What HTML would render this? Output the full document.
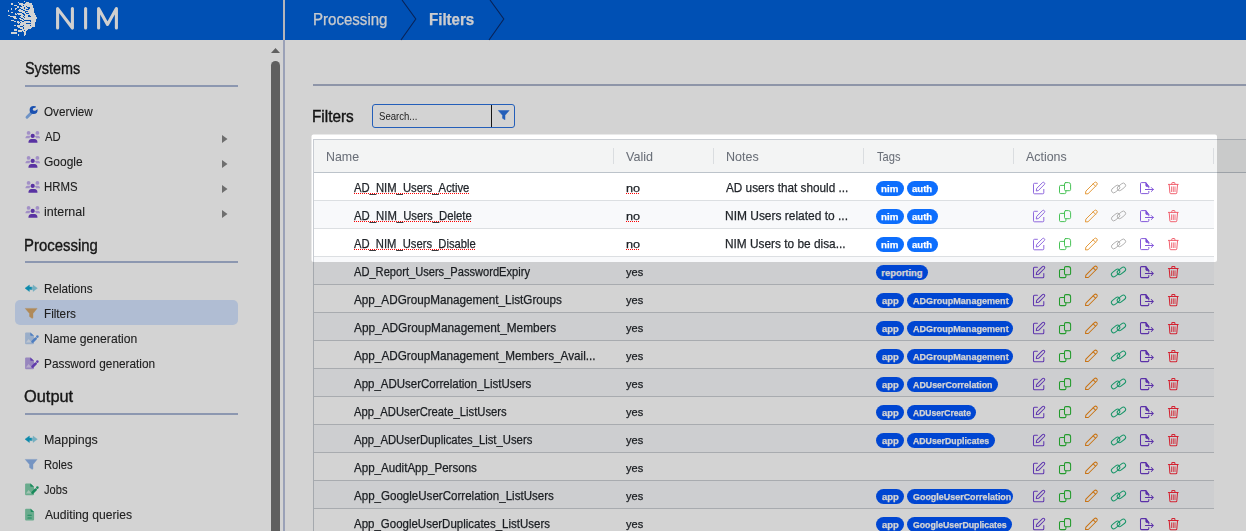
<!DOCTYPE html><html><head><meta charset="utf-8"><style>
*{box-sizing:border-box;margin:0;padding:0}
html,body{width:1246px;height:531px;overflow:hidden;background:#fff;font-family:"Liberation Sans",sans-serif;color:#222}
.t{position:absolute;white-space:nowrap;line-height:1;transform-origin:0 0;-webkit-text-stroke:0.25px currentColor}

.b{position:absolute}
svg{position:absolute;overflow:visible}
.pill{position:absolute;height:15px;border-radius:7.5px;background:#0d6efd;overflow:hidden}
</style></head><body>
<div class="b" style="left:0;top:0;width:1246px;height:40px;background:#0061d9"></div>
<svg style="left:0;top:0" width="1246" height="40"><path d="M402 0 L415.8 19 L401 40" fill="none" stroke="#0a2a6a" stroke-width="1.1"/><path d="M490 0 L503.8 19 L489 40" fill="none" stroke="#0a2a6a" stroke-width="1.1"/></svg>
<svg style="left:0;top:0" width="140" height="40"><g fill="none" stroke="#fafafa" stroke-width="3.1" stroke-linecap="round" stroke-linejoin="round"><path d="M57.6 28 V8.6 L72.4 28 V8.6"/><path d="M85.6 8.6 V28"/><path d="M98.6 28 V8.6 L107.5 24.5 L116.4 8.6 V28"/></g></svg>
<svg style="left:0;top:0" width="45" height="40" shape-rendering="auto"><g fill="#ffffff"><rect x="24" y="1" width="1" height="1"/><rect x="18" y="2" width="1" height="1"/><rect x="26" y="2" width="3" height="1"/><rect x="11" y="3" width="2" height="1"/><rect x="19" y="3" width="4" height="1"/><rect x="25" y="3" width="7" height="1"/><rect x="11" y="4" width="2" height="1"/><rect x="19" y="4" width="5" height="1"/><rect x="24" y="4" width="8" height="1"/><rect x="14" y="5" width="3" height="1"/><rect x="21" y="5" width="2" height="1"/><rect x="24" y="5" width="9" height="1"/><rect x="17" y="6" width="2" height="1"/><rect x="22" y="6" width="4" height="1"/><rect x="27" y="6" width="6" height="1"/><rect x="17" y="7" width="2" height="1"/><rect x="20" y="7" width="4" height="1"/><rect x="25" y="7" width="2" height="1"/><rect x="30" y="7" width="3" height="1"/><rect x="11" y="8" width="1" height="1"/><rect x="15" y="8" width="2" height="1"/><rect x="21" y="8" width="3" height="1"/><rect x="25" y="8" width="3" height="1"/><rect x="30" y="8" width="4" height="1"/><rect x="11" y="9" width="1" height="1"/><rect x="15" y="9" width="1" height="1"/><rect x="19" y="9" width="2" height="1"/><rect x="23" y="9" width="3" height="1"/><rect x="29" y="9" width="5" height="1"/><rect x="8" y="10" width="1" height="1"/><rect x="18" y="10" width="5" height="1"/><rect x="25" y="10" width="9" height="1"/><rect x="8" y="11" width="1" height="1"/><rect x="19" y="11" width="5" height="1"/><rect x="24" y="11" width="1" height="1"/><rect x="28" y="11" width="6" height="1"/><rect x="11" y="12" width="2" height="1"/><rect x="22" y="12" width="3" height="1"/><rect x="26" y="12" width="8" height="1"/><rect x="15" y="13" width="1" height="1"/><rect x="17" y="13" width="5" height="1"/><rect x="24" y="13" width="2" height="1"/><rect x="29" y="13" width="6" height="1"/><rect x="15" y="14" width="2" height="1"/><rect x="18" y="14" width="5" height="1"/><rect x="25" y="14" width="10" height="1"/><rect x="8" y="15" width="2" height="1"/><rect x="21" y="15" width="3" height="1"/><rect x="25" y="15" width="3" height="1"/><rect x="30" y="15" width="6" height="1"/><rect x="10" y="16" width="6" height="1"/><rect x="20" y="16" width="3" height="1"/><rect x="24" y="16" width="4" height="1"/><rect x="31" y="16" width="5" height="1"/><rect x="13" y="17" width="3" height="1"/><rect x="21" y="17" width="3" height="1"/><rect x="25" y="17" width="12" height="1"/><rect x="14" y="18" width="3" height="1"/><rect x="19" y="18" width="2" height="1"/><rect x="23" y="18" width="14" height="1"/><rect x="20" y="19" width="3" height="1"/><rect x="24" y="19" width="12" height="1"/><rect x="11" y="20" width="3" height="1"/><rect x="22" y="20" width="2" height="1"/><rect x="31" y="20" width="5" height="1"/><rect x="14" y="21" width="2" height="1"/><rect x="17" y="21" width="2" height="1"/><rect x="20" y="21" width="2" height="1"/><rect x="24" y="21" width="6" height="1"/><rect x="31" y="21" width="5" height="1"/><rect x="17" y="22" width="3" height="1"/><rect x="21" y="22" width="14" height="1"/><rect x="18" y="23" width="1" height="1"/><rect x="20" y="23" width="6" height="1"/><rect x="31" y="23" width="4" height="1"/><rect x="20" y="24" width="6" height="1"/><rect x="26" y="24" width="9" height="1"/><rect x="14" y="25" width="2" height="1"/><rect x="17" y="25" width="6" height="1"/><rect x="24" y="25" width="6" height="1"/><rect x="31" y="25" width="4" height="1"/><rect x="17" y="26" width="3" height="1"/><rect x="23" y="26" width="12" height="1"/><rect x="18" y="27" width="5" height="1"/><rect x="24" y="27" width="8" height="1"/><rect x="20" y="28" width="3" height="1"/><rect x="24" y="28" width="7" height="1"/><rect x="14" y="29" width="3" height="1"/><rect x="22" y="29" width="6" height="1"/><rect x="14" y="30" width="3" height="1"/><rect x="18" y="30" width="4" height="1"/><rect x="22" y="30" width="2" height="1"/><rect x="25" y="30" width="2" height="1"/><rect x="18" y="31" width="4" height="1"/><rect x="23" y="31" width="3" height="1"/><rect x="11" y="32" width="6" height="1"/><rect x="24" y="32" width="2" height="1"/><rect x="11" y="33" width="6" height="1"/><rect x="24" y="33" width="2" height="1"/><rect x="18" y="34" width="1" height="1"/><rect x="24" y="34" width="2" height="1"/><rect x="18" y="35" width="1" height="1"/><rect x="24" y="35" width="1" height="1"/></g></svg>
<div class="b" style="left:283px;top:0;width:2px;height:40px;background:#dadbe2"></div>
<div class="b" style="left:283px;top:40px;width:2px;height:491px;background:#bac2dd"></div>
<svg style="left:270px;top:46px" width="12" height="10"><path d="M1 7 L5.5 2 L10 7 Z" fill="#747474"/></svg>
<div class="b" style="left:271px;top:61px;width:9px;height:480px;border-radius:4.5px;background:#737373"></div>
<div class="b" style="left:25px;top:85px;width:213px;height:2px;background:#a9b7d5"></div>
<div class="b" style="left:25px;top:261px;width:213px;height:2px;background:#a9b7d5"></div>
<div class="b" style="left:25px;top:413px;width:213px;height:2px;background:#a9b7d5"></div>
<div class="b" style="left:15px;top:300px;width:223px;height:25px;border-radius:5px;background:#d5e5ff"></div>
<svg style="left:222px;top:135px" width="6" height="8"><path d="M0 0 L5.5 4 L0 8 Z" fill="#858585"/></svg>
<svg style="left:222px;top:160px" width="6" height="8"><path d="M0 0 L5.5 4 L0 8 Z" fill="#858585"/></svg>
<svg style="left:222px;top:185px" width="6" height="8"><path d="M0 0 L5.5 4 L0 8 Z" fill="#858585"/></svg>
<svg style="left:222px;top:210px" width="6" height="8"><path d="M0 0 L5.5 4 L0 8 Z" fill="#858585"/></svg>
<svg style="left:24.5px;top:104.5px" width="14" height="14" viewBox="0 0 14 14"><path d="M7.6 6.6 L2 12.2" stroke="#86b2ee" stroke-width="2.9" stroke-linecap="round"/><circle cx="8.6" cy="4.9" r="4.0" fill="#1f61d5"/><path d="M9.3 4.4 L11.6 0.6 L14.2 3.2 L10.4 5.5 Z" fill="#fff"/><circle cx="9.4" cy="4.3" r="1.5" fill="#fff"/></svg>
<svg style="left:24.6px;top:130px" width="16" height="13" viewBox="0 0 16 13"><g fill="#c4aef0"><circle cx="3.6" cy="2.9" r="1.9"/><circle cx="12.4" cy="2.9" r="1.9"/><path d="M0.4 8.2 C0.4 6.6 1.3 5.7 2.6 5.7 H4.6 C5.1 5.7 5.5 5.9 5.8 6.2 C5 6.8 4.6 7.4 4.5 8.2 Z"/><path d="M15.1 8.2 C15.1 6.6 14.2 5.7 12.9 5.7 H10.9 C10.4 5.7 10 5.9 9.7 6.2 C10.5 6.8 10.9 7.4 11 8.2 Z"/></g><g fill="#6b3dc4"><circle cx="7.7" cy="5.9" r="2.1"/><path d="M3.4 12.7 C3.4 10.4 4.6 9.1 6.4 9.1 H9.5 C11.3 9.1 12.5 10.4 12.5 12.7 Z"/></g></svg>
<svg style="left:24.6px;top:155px" width="16" height="13" viewBox="0 0 16 13"><g fill="#c4aef0"><circle cx="3.6" cy="2.9" r="1.9"/><circle cx="12.4" cy="2.9" r="1.9"/><path d="M0.4 8.2 C0.4 6.6 1.3 5.7 2.6 5.7 H4.6 C5.1 5.7 5.5 5.9 5.8 6.2 C5 6.8 4.6 7.4 4.5 8.2 Z"/><path d="M15.1 8.2 C15.1 6.6 14.2 5.7 12.9 5.7 H10.9 C10.4 5.7 10 5.9 9.7 6.2 C10.5 6.8 10.9 7.4 11 8.2 Z"/></g><g fill="#6b3dc4"><circle cx="7.7" cy="5.9" r="2.1"/><path d="M3.4 12.7 C3.4 10.4 4.6 9.1 6.4 9.1 H9.5 C11.3 9.1 12.5 10.4 12.5 12.7 Z"/></g></svg>
<svg style="left:24.6px;top:180px" width="16" height="13" viewBox="0 0 16 13"><g fill="#c4aef0"><circle cx="3.6" cy="2.9" r="1.9"/><circle cx="12.4" cy="2.9" r="1.9"/><path d="M0.4 8.2 C0.4 6.6 1.3 5.7 2.6 5.7 H4.6 C5.1 5.7 5.5 5.9 5.8 6.2 C5 6.8 4.6 7.4 4.5 8.2 Z"/><path d="M15.1 8.2 C15.1 6.6 14.2 5.7 12.9 5.7 H10.9 C10.4 5.7 10 5.9 9.7 6.2 C10.5 6.8 10.9 7.4 11 8.2 Z"/></g><g fill="#6b3dc4"><circle cx="7.7" cy="5.9" r="2.1"/><path d="M3.4 12.7 C3.4 10.4 4.6 9.1 6.4 9.1 H9.5 C11.3 9.1 12.5 10.4 12.5 12.7 Z"/></g></svg>
<svg style="left:24.6px;top:205px" width="16" height="13" viewBox="0 0 16 13"><g fill="#c4aef0"><circle cx="3.6" cy="2.9" r="1.9"/><circle cx="12.4" cy="2.9" r="1.9"/><path d="M0.4 8.2 C0.4 6.6 1.3 5.7 2.6 5.7 H4.6 C5.1 5.7 5.5 5.9 5.8 6.2 C5 6.8 4.6 7.4 4.5 8.2 Z"/><path d="M15.1 8.2 C15.1 6.6 14.2 5.7 12.9 5.7 H10.9 C10.4 5.7 10 5.9 9.7 6.2 C10.5 6.8 10.9 7.4 11 8.2 Z"/></g><g fill="#6b3dc4"><circle cx="7.7" cy="5.9" r="2.1"/><path d="M3.4 12.7 C3.4 10.4 4.6 9.1 6.4 9.1 H9.5 C11.3 9.1 12.5 10.4 12.5 12.7 Z"/></g></svg>
<svg style="left:24.8px;top:284.8px" width="14" height="8" viewBox="0 0 14 8"><path d="M0 3.2 L4.4 0 V2 H7 V4.6 H4.4 V6.5 Z" fill="#10a7d0" stroke="#10a7d0" stroke-width="0.4" stroke-linejoin="round"/><path d="M12.4 3.2 L8 0 V2 H6.9 V4.6 H8 V6.5 Z" fill="#8ed3e8" stroke="#8ed3e8" stroke-width="0.4" stroke-linejoin="round"/></svg>
<svg style="left:24.8px;top:307.6px" width="13" height="11" viewBox="0 0 13 11"><path d="M0.2 0.4 H12.1 L8 5.5 V9.4 L7.3 10.4 L4.5 8.6 V5.5 Z" fill="#d5a66a" stroke="#d5a66a" stroke-width="0.4" stroke-linejoin="round"/></svg>
<svg style="left:25.1px;top:331.8px" width="14" height="13" viewBox="0 0 14 13"><path d="M1 0.5 H5.6 L9 3.8 V11.3 C9 11.8 8.6 12.2 8.1 12.2 H1 C0.5 12.2 0.1 11.8 0.1 11.3 V1.4 C0.1 0.9 0.5 0.5 1 0.5Z" fill="#bad2f3"/><path d="M5.3 0.5 L9 3.8 H6.2 C5.7 3.8 5.3 3.4 5.3 2.9Z" fill="#5f98e8"/><path d="M0.9 10.6 L3.6 7.1 L6.6 10.6 Z" fill="#e4eefb"/><path d="M7.6 9.6 L10.6 6.6" stroke="#5f98e8" stroke-width="2.7" stroke-linecap="round"/><circle cx="12.4" cy="4.6" r="1.3" fill="#5f98e8"/></svg>
<svg style="left:25.1px;top:356.8px" width="14" height="13" viewBox="0 0 14 13"><path d="M1 0.5 H5.6 L9 3.8 V11.3 C9 11.8 8.6 12.2 8.1 12.2 H1 C0.5 12.2 0.1 11.8 0.1 11.3 V1.4 C0.1 0.9 0.5 0.5 1 0.5Z" fill="#b7a2e6"/><path d="M5.3 0.5 L9 3.8 H6.2 C5.7 3.8 5.3 3.4 5.3 2.9Z" fill="#7447cf"/><path d="M0.9 10.6 L3.6 7.1 L6.6 10.6 Z" fill="#ddd0f5"/><path d="M7.6 9.6 L10.6 6.6" stroke="#7447cf" stroke-width="2.7" stroke-linecap="round"/><circle cx="12.4" cy="4.6" r="1.3" fill="#7447cf"/></svg>
<svg style="left:24.8px;top:435.8px" width="14" height="8" viewBox="0 0 14 8"><path d="M0 3.2 L4.4 0 V2 H7 V4.6 H4.4 V6.5 Z" fill="#10a7d0" stroke="#10a7d0" stroke-width="0.4" stroke-linejoin="round"/><path d="M12.4 3.2 L8 0 V2 H6.9 V4.6 H8 V6.5 Z" fill="#8ed3e8" stroke="#8ed3e8" stroke-width="0.4" stroke-linejoin="round"/></svg>
<svg style="left:24.8px;top:458.6px" width="13" height="11" viewBox="0 0 13 11"><path d="M0.2 0.4 H12.1 L8 5.5 V9.4 L7.3 10.4 L4.5 8.6 V5.5 Z" fill="#8eb3ea" stroke="#8eb3ea" stroke-width="0.4" stroke-linejoin="round"/></svg>
<svg style="left:25.1px;top:482.8px" width="14" height="13" viewBox="0 0 14 13"><path d="M1 0.5 H5.6 L9 3.8 V11.3 C9 11.8 8.6 12.2 8.1 12.2 H1 C0.5 12.2 0.1 11.8 0.1 11.3 V1.4 C0.1 0.9 0.5 0.5 1 0.5Z" fill="#7fcfaa"/><path d="M5.3 0.5 L9 3.8 H6.2 C5.7 3.8 5.3 3.4 5.3 2.9Z" fill="#1ea66e"/><path d="M0.9 10.6 L3.6 7.1 L6.6 10.6 Z" fill="#c6ecd9"/><path d="M7.6 9.6 L10.6 6.6" stroke="#1ea66e" stroke-width="2.7" stroke-linecap="round"/><circle cx="12.4" cy="4.6" r="1.3" fill="#1ea66e"/></svg>
<svg style="left:24.8px;top:508px" width="10" height="13" viewBox="0 0 10 13"><path d="M1 0.7 H5.8 L9.1 4 V11.6 C9.1 12.1 8.7 12.5 8.2 12.5 H1 C0.5 12.5 0.1 12.1 0.1 11.6 V1.6 C0.1 1.1 0.5 0.7 1 0.7Z" fill="#7fcfaa"/><path d="M5.6 0.7 L9.1 4 H6.4 C6 4 5.6 3.6 5.6 3.2Z" fill="#22a872"/><rect x="2.4" y="6.7" width="4.4" height="1.1" rx="0.5" fill="#22a872"/><rect x="2.4" y="9.4" width="4.4" height="1.1" rx="0.5" fill="#22a872"/></svg>
<div class="b" style="left:313px;top:84px;width:933px;height:2px;background:#acb4cb"></div>
<div class="b" style="left:372px;top:104px;width:143px;height:24px;border:1.5px solid #2a72e0;border-radius:3px"></div>
<div class="b" style="left:490.8px;top:105px;width:1.2px;height:22px;background:#1a1a1a"></div>
<svg style="left:497.6px;top:109.8px" width="12" height="11" viewBox="0 0 12 11"><path d="M0.3 0.5 H11.2 L7 5.3 V9.8 L4.5 8.3 V5.3Z" fill="#2a72e0" stroke="#2a72e0" stroke-width="0.5" stroke-linejoin="round"/></svg>
<div class="b" style="left:314px;top:139px;width:932px;height:34px;background:#f3f4f4;border-top:1px solid #c9cdd3;border-bottom:1px solid #bcc3ca"></div>
<div class="b" style="left:313px;top:139px;width:1px;height:392px;background:#c8ccd2"></div>
<div class="b" style="left:613.0px;top:148px;width:1px;height:16px;background:#dadde0"></div>
<div class="b" style="left:713.0px;top:148px;width:1px;height:16px;background:#dadde0"></div>
<div class="b" style="left:863.0px;top:148px;width:1px;height:16px;background:#dadde0"></div>
<div class="b" style="left:1013.0px;top:148px;width:1px;height:16px;background:#dadde0"></div>
<div class="b" style="left:1213.0px;top:148px;width:1px;height:16px;background:#dadde0"></div>
<div class="b" style="left:314px;top:173px;width:900px;height:28px;background:#ffffff;border-bottom:1px solid #dcdfe2"></div>
<div class="b" style="left:314px;top:201px;width:900px;height:28px;background:#f8f9fb;border-bottom:1px solid #dcdfe2"></div>
<div class="b" style="left:314px;top:229px;width:900px;height:28px;background:#ffffff;border-bottom:1px solid #dcdfe2"></div>
<div class="b" style="left:314px;top:257px;width:900px;height:28px;background:#f8f9fb;border-bottom:1px solid #cbcfd3"></div>
<div class="b" style="left:314px;top:285px;width:900px;height:28px;background:#ffffff;border-bottom:1px solid #cbcfd3"></div>
<div class="b" style="left:314px;top:313px;width:900px;height:28px;background:#f8f9fb;border-bottom:1px solid #cbcfd3"></div>
<div class="b" style="left:314px;top:341px;width:900px;height:28px;background:#ffffff;border-bottom:1px solid #cbcfd3"></div>
<div class="b" style="left:314px;top:369px;width:900px;height:28px;background:#f8f9fb;border-bottom:1px solid #cbcfd3"></div>
<div class="b" style="left:314px;top:397px;width:900px;height:28px;background:#ffffff;border-bottom:1px solid #cbcfd3"></div>
<div class="b" style="left:314px;top:425px;width:900px;height:28px;background:#f8f9fb;border-bottom:1px solid #cbcfd3"></div>
<div class="b" style="left:314px;top:453px;width:900px;height:28px;background:#ffffff;border-bottom:1px solid #cbcfd3"></div>
<div class="b" style="left:314px;top:481px;width:900px;height:28px;background:#f8f9fb;border-bottom:1px solid #cbcfd3"></div>
<div class="b" style="left:314px;top:509px;width:900px;height:28px;background:#ffffff;border-bottom:1px solid #cbcfd3"></div>
<div class="pill" style="left:876px;top:181px;width:27.7px;"><div class="t" style="left:5.22px;top:3px;font-size:9.42px;color:#fff;font-weight:bold;transform:scaleX(1.0357);">nim</div></div>
<div class="pill" style="left:907px;top:181px;width:31.0px;"><div class="t" style="left:5.41px;top:3px;font-size:9.42px;color:#fff;font-weight:bold;transform:scaleX(1.0143);">auth</div></div>
<div class="pill" style="left:876px;top:209px;width:27.7px;"><div class="t" style="left:5.22px;top:3px;font-size:9.42px;color:#fff;font-weight:bold;transform:scaleX(1.0357);">nim</div></div>
<div class="pill" style="left:907px;top:209px;width:31.0px;"><div class="t" style="left:5.41px;top:3px;font-size:9.42px;color:#fff;font-weight:bold;transform:scaleX(1.0143);">auth</div></div>
<div class="pill" style="left:876px;top:237px;width:27.7px;"><div class="t" style="left:5.22px;top:3px;font-size:9.42px;color:#fff;font-weight:bold;transform:scaleX(1.0357);">nim</div></div>
<div class="pill" style="left:907px;top:237px;width:31.0px;"><div class="t" style="left:5.41px;top:3px;font-size:9.42px;color:#fff;font-weight:bold;transform:scaleX(1.0143);">auth</div></div>
<div class="pill" style="left:876px;top:265px;width:52.0px;background:#0055fe;"><div class="t" style="left:5.34px;top:3px;font-size:9.42px;color:#fff;font-weight:bold;">reporting</div></div>
<div class="pill" style="left:876px;top:293px;width:27.6px;background:#0055fe;"><div class="t" style="left:5.52px;top:3px;font-size:9.42px;color:#fff;font-weight:bold;transform:scaleX(1.0057);">app</div></div>
<div class="pill" style="left:906.8px;top:293px;width:106.2px;background:#0055fe;"><div class="t" style="left:5.93px;top:3px;font-size:9.42px;color:#fff;font-weight:bold;transform:scaleX(0.9636);">ADGroupManagement</div></div>
<div class="pill" style="left:876px;top:321px;width:27.6px;background:#0055fe;"><div class="t" style="left:5.52px;top:3px;font-size:9.42px;color:#fff;font-weight:bold;transform:scaleX(1.0057);">app</div></div>
<div class="pill" style="left:906.8px;top:321px;width:106.2px;background:#0055fe;"><div class="t" style="left:5.93px;top:3px;font-size:9.42px;color:#fff;font-weight:bold;transform:scaleX(0.9636);">ADGroupManagement</div></div>
<div class="pill" style="left:876px;top:349px;width:27.6px;background:#0055fe;"><div class="t" style="left:5.52px;top:3px;font-size:9.42px;color:#fff;font-weight:bold;transform:scaleX(1.0057);">app</div></div>
<div class="pill" style="left:906.8px;top:349px;width:106.2px;background:#0055fe;"><div class="t" style="left:5.93px;top:3px;font-size:9.42px;color:#fff;font-weight:bold;transform:scaleX(0.9636);">ADGroupManagement</div></div>
<div class="pill" style="left:876px;top:377px;width:27.6px;background:#0055fe;"><div class="t" style="left:5.52px;top:3px;font-size:9.42px;color:#fff;font-weight:bold;transform:scaleX(1.0057);">app</div></div>
<div class="pill" style="left:906.8px;top:377px;width:91.0px;background:#0055fe;"><div class="t" style="left:5.93px;top:3px;font-size:9.42px;color:#fff;font-weight:bold;transform:scaleX(0.9389);">ADUserCorrelation</div></div>
<div class="pill" style="left:876px;top:405px;width:27.6px;background:#0055fe;"><div class="t" style="left:5.52px;top:3px;font-size:9.42px;color:#fff;font-weight:bold;transform:scaleX(1.0057);">app</div></div>
<div class="pill" style="left:906.8px;top:405px;width:69.7px;background:#0055fe;"><div class="t" style="left:5.94px;top:3px;font-size:9.42px;color:#fff;font-weight:bold;transform:scaleX(0.9083);">ADUserCreate</div></div>
<div class="pill" style="left:876px;top:433px;width:27.6px;background:#0055fe;"><div class="t" style="left:5.52px;top:3px;font-size:9.42px;color:#fff;font-weight:bold;transform:scaleX(1.0057);">app</div></div>
<div class="pill" style="left:906.8px;top:433px;width:87.8px;background:#0055fe;"><div class="t" style="left:5.94px;top:3px;font-size:9.42px;color:#fff;font-weight:bold;transform:scaleX(0.9278);">ADUserDuplicates</div></div>
<div class="pill" style="left:876px;top:489px;width:27.6px;background:#0055fe;"><div class="t" style="left:5.52px;top:3px;font-size:9.42px;color:#fff;font-weight:bold;transform:scaleX(1.0057);">app</div></div>
<div class="pill" style="left:906.8px;top:489px;width:106.4px;background:#0055fe;"><div class="t" style="left:5.84px;top:3px;font-size:9.42px;color:#fff;font-weight:bold;transform:scaleX(0.9496);">GoogleUserCorrelation</div></div>
<div class="pill" style="left:876px;top:517px;width:27.6px;background:#0055fe;"><div class="t" style="left:5.52px;top:3px;font-size:9.42px;color:#fff;font-weight:bold;transform:scaleX(1.0057);">app</div></div>
<div class="pill" style="left:906.8px;top:517px;width:105.1px;background:#0055fe;"><div class="t" style="left:5.85px;top:3px;font-size:9.42px;color:#fff;font-weight:bold;transform:scaleX(0.9279);">GoogleUserDuplicates</div></div>
<svg style="left:0;top:172px" width="1246" height="28" viewBox="0 0 1246 28"><g fill="none" stroke-width="0.95" stroke-linecap="round" stroke-linejoin="round"><g stroke="#8a62dc"><path d="M1037.4 11.3 H1034.5 Q1033.5 11.3 1033.5 12.3 V20.8 Q1033.5 21.8 1034.5 21.8 H1042.8 Q1043.8 21.8 1043.8 20.8 V17.4"/><path d="M1036.3 18.6 L1036.7 16.4 L1042.5 10.6 A1.35 1.35 0 0 1 1044.4 12.5 L1038.6 18.3 Z"/></g><g stroke="#3fc04e"><path d="M1065.7 10.6 H1068.5 Q1070.6 10.6 1070.6 12.7 V17.5 Q1070.6 18.7 1069.4 18.7 H1065.7 Q1064.5 18.7 1064.5 17.5 V11.8 Q1064.5 10.6 1065.7 10.6 Z"/><path d="M1064.4 13.4 H1060.7 Q1059.5 13.4 1059.5 14.6 V20.4 Q1059.5 21.6 1060.7 21.6 H1064.7 Q1065.9 21.6 1065.9 20.4 V18.8"/></g><g stroke="#e39530"><path d="M1085.5 21.5 L1085.9 19.1 L1094.4 10.6 A1.7 1.7 0 0 1 1096.8 13 L1088.3 21.5 Z"/><path d="M1093.2 11.9 L1095.5 14.2"/></g><g stroke="#b0b0b0" stroke-width="0.8999999999999999"><rect x="1110.9" y="14.7" width="9.4" height="4.6" rx="2.3" transform="rotate(-38 1115.6 17)"/><rect x="1116.7" y="12.6" width="9.4" height="4.6" rx="2.3" transform="rotate(-38 1121.4 14.9)"/></g><g stroke="#7d50d8"><path d="M1148.8 15.9 V14.6 L1145.8 10.6 H1141.5 Q1140.5 10.6 1140.5 11.6 V20.6 Q1140.5 21.6 1141.5 21.6 H1147.8 Q1148.8 21.6 1148.8 20.6 V19.4"/><path d="M1145.8 10.8 V13.6 Q1145.8 14.6 1146.8 14.6 H1148.6 Z" fill="#7d50d8" stroke-width="0.8"/><path d="M1145.4 17.5 H1153.3 M1151.3 15.5 L1153.3 17.5 L1151.3 19.5"/></g><g stroke="#f05a68"><path d="M1168.4 12.4 H1178.2"/><path d="M1171.8 12.2 V11.2 Q1171.8 10.5 1172.5 10.5 H1174.2 Q1174.9 10.5 1174.9 11.2 V12.2"/><path d="M1169.2 12.8 L1169.9 20.9 Q1170 21.7 1170.8 21.7 H1175.9 Q1176.7 21.7 1176.8 20.9 L1177.5 12.8"/><path d="M1171.6 14.8 V19.6 M1173.3 14.8 V19.6 M1175 14.8 V19.6" stroke-width="0.85"/></g></g></svg>
<svg style="left:0;top:200px" width="1246" height="28" viewBox="0 0 1246 28"><g fill="none" stroke-width="0.95" stroke-linecap="round" stroke-linejoin="round"><g stroke="#8a62dc"><path d="M1037.4 11.3 H1034.5 Q1033.5 11.3 1033.5 12.3 V20.8 Q1033.5 21.8 1034.5 21.8 H1042.8 Q1043.8 21.8 1043.8 20.8 V17.4"/><path d="M1036.3 18.6 L1036.7 16.4 L1042.5 10.6 A1.35 1.35 0 0 1 1044.4 12.5 L1038.6 18.3 Z"/></g><g stroke="#3fc04e"><path d="M1065.7 10.6 H1068.5 Q1070.6 10.6 1070.6 12.7 V17.5 Q1070.6 18.7 1069.4 18.7 H1065.7 Q1064.5 18.7 1064.5 17.5 V11.8 Q1064.5 10.6 1065.7 10.6 Z"/><path d="M1064.4 13.4 H1060.7 Q1059.5 13.4 1059.5 14.6 V20.4 Q1059.5 21.6 1060.7 21.6 H1064.7 Q1065.9 21.6 1065.9 20.4 V18.8"/></g><g stroke="#e39530"><path d="M1085.5 21.5 L1085.9 19.1 L1094.4 10.6 A1.7 1.7 0 0 1 1096.8 13 L1088.3 21.5 Z"/><path d="M1093.2 11.9 L1095.5 14.2"/></g><g stroke="#b0b0b0" stroke-width="0.8999999999999999"><rect x="1110.9" y="14.7" width="9.4" height="4.6" rx="2.3" transform="rotate(-38 1115.6 17)"/><rect x="1116.7" y="12.6" width="9.4" height="4.6" rx="2.3" transform="rotate(-38 1121.4 14.9)"/></g><g stroke="#7d50d8"><path d="M1148.8 15.9 V14.6 L1145.8 10.6 H1141.5 Q1140.5 10.6 1140.5 11.6 V20.6 Q1140.5 21.6 1141.5 21.6 H1147.8 Q1148.8 21.6 1148.8 20.6 V19.4"/><path d="M1145.8 10.8 V13.6 Q1145.8 14.6 1146.8 14.6 H1148.6 Z" fill="#7d50d8" stroke-width="0.8"/><path d="M1145.4 17.5 H1153.3 M1151.3 15.5 L1153.3 17.5 L1151.3 19.5"/></g><g stroke="#f05a68"><path d="M1168.4 12.4 H1178.2"/><path d="M1171.8 12.2 V11.2 Q1171.8 10.5 1172.5 10.5 H1174.2 Q1174.9 10.5 1174.9 11.2 V12.2"/><path d="M1169.2 12.8 L1169.9 20.9 Q1170 21.7 1170.8 21.7 H1175.9 Q1176.7 21.7 1176.8 20.9 L1177.5 12.8"/><path d="M1171.6 14.8 V19.6 M1173.3 14.8 V19.6 M1175 14.8 V19.6" stroke-width="0.85"/></g></g></svg>
<svg style="left:0;top:228px" width="1246" height="28" viewBox="0 0 1246 28"><g fill="none" stroke-width="0.95" stroke-linecap="round" stroke-linejoin="round"><g stroke="#8a62dc"><path d="M1037.4 11.3 H1034.5 Q1033.5 11.3 1033.5 12.3 V20.8 Q1033.5 21.8 1034.5 21.8 H1042.8 Q1043.8 21.8 1043.8 20.8 V17.4"/><path d="M1036.3 18.6 L1036.7 16.4 L1042.5 10.6 A1.35 1.35 0 0 1 1044.4 12.5 L1038.6 18.3 Z"/></g><g stroke="#3fc04e"><path d="M1065.7 10.6 H1068.5 Q1070.6 10.6 1070.6 12.7 V17.5 Q1070.6 18.7 1069.4 18.7 H1065.7 Q1064.5 18.7 1064.5 17.5 V11.8 Q1064.5 10.6 1065.7 10.6 Z"/><path d="M1064.4 13.4 H1060.7 Q1059.5 13.4 1059.5 14.6 V20.4 Q1059.5 21.6 1060.7 21.6 H1064.7 Q1065.9 21.6 1065.9 20.4 V18.8"/></g><g stroke="#e39530"><path d="M1085.5 21.5 L1085.9 19.1 L1094.4 10.6 A1.7 1.7 0 0 1 1096.8 13 L1088.3 21.5 Z"/><path d="M1093.2 11.9 L1095.5 14.2"/></g><g stroke="#b0b0b0" stroke-width="0.8999999999999999"><rect x="1110.9" y="14.7" width="9.4" height="4.6" rx="2.3" transform="rotate(-38 1115.6 17)"/><rect x="1116.7" y="12.6" width="9.4" height="4.6" rx="2.3" transform="rotate(-38 1121.4 14.9)"/></g><g stroke="#7d50d8"><path d="M1148.8 15.9 V14.6 L1145.8 10.6 H1141.5 Q1140.5 10.6 1140.5 11.6 V20.6 Q1140.5 21.6 1141.5 21.6 H1147.8 Q1148.8 21.6 1148.8 20.6 V19.4"/><path d="M1145.8 10.8 V13.6 Q1145.8 14.6 1146.8 14.6 H1148.6 Z" fill="#7d50d8" stroke-width="0.8"/><path d="M1145.4 17.5 H1153.3 M1151.3 15.5 L1153.3 17.5 L1151.3 19.5"/></g><g stroke="#f05a68"><path d="M1168.4 12.4 H1178.2"/><path d="M1171.8 12.2 V11.2 Q1171.8 10.5 1172.5 10.5 H1174.2 Q1174.9 10.5 1174.9 11.2 V12.2"/><path d="M1169.2 12.8 L1169.9 20.9 Q1170 21.7 1170.8 21.7 H1175.9 Q1176.7 21.7 1176.8 20.9 L1177.5 12.8"/><path d="M1171.6 14.8 V19.6 M1173.3 14.8 V19.6 M1175 14.8 V19.6" stroke-width="0.85"/></g></g></svg>
<svg style="left:0;top:256px" width="1246" height="28" viewBox="0 0 1246 28"><g fill="none" stroke-width="1.05" stroke-linecap="round" stroke-linejoin="round"><g stroke="#7342d3"><path d="M1037.4 11.3 H1034.5 Q1033.5 11.3 1033.5 12.3 V20.8 Q1033.5 21.8 1034.5 21.8 H1042.8 Q1043.8 21.8 1043.8 20.8 V17.4"/><path d="M1036.3 18.6 L1036.7 16.4 L1042.5 10.6 A1.35 1.35 0 0 1 1044.4 12.5 L1038.6 18.3 Z"/></g><g stroke="#2abb36"><path d="M1065.7 10.6 H1068.5 Q1070.6 10.6 1070.6 12.7 V17.5 Q1070.6 18.7 1069.4 18.7 H1065.7 Q1064.5 18.7 1064.5 17.5 V11.8 Q1064.5 10.6 1065.7 10.6 Z"/><path d="M1064.4 13.4 H1060.7 Q1059.5 13.4 1059.5 14.6 V20.4 Q1059.5 21.6 1060.7 21.6 H1064.7 Q1065.9 21.6 1065.9 20.4 V18.8"/></g><g stroke="#f28b18"><path d="M1085.5 21.5 L1085.9 19.1 L1094.4 10.6 A1.7 1.7 0 0 1 1096.8 13 L1088.3 21.5 Z"/><path d="M1093.2 11.9 L1095.5 14.2"/></g><g stroke="#1eb57f" stroke-width="1.0"><rect x="1110.9" y="14.7" width="9.4" height="4.6" rx="2.3" transform="rotate(-38 1115.6 17)"/><rect x="1116.7" y="12.6" width="9.4" height="4.6" rx="2.3" transform="rotate(-38 1121.4 14.9)"/></g><g stroke="#6d3acb"><path d="M1148.8 15.9 V14.6 L1145.8 10.6 H1141.5 Q1140.5 10.6 1140.5 11.6 V20.6 Q1140.5 21.6 1141.5 21.6 H1147.8 Q1148.8 21.6 1148.8 20.6 V19.4"/><path d="M1145.8 10.8 V13.6 Q1145.8 14.6 1146.8 14.6 H1148.6 Z" fill="#6d3acb" stroke-width="0.8"/><path d="M1145.4 17.5 H1153.3 M1151.3 15.5 L1153.3 17.5 L1151.3 19.5"/></g><g stroke="#ff2a3c"><path d="M1168.4 12.4 H1178.2"/><path d="M1171.8 12.2 V11.2 Q1171.8 10.5 1172.5 10.5 H1174.2 Q1174.9 10.5 1174.9 11.2 V12.2"/><path d="M1169.2 12.8 L1169.9 20.9 Q1170 21.7 1170.8 21.7 H1175.9 Q1176.7 21.7 1176.8 20.9 L1177.5 12.8"/><path d="M1171.6 14.8 V19.6 M1173.3 14.8 V19.6 M1175 14.8 V19.6" stroke-width="0.85"/></g></g></svg>
<svg style="left:0;top:284px" width="1246" height="28" viewBox="0 0 1246 28"><g fill="none" stroke-width="1.05" stroke-linecap="round" stroke-linejoin="round"><g stroke="#7342d3"><path d="M1037.4 11.3 H1034.5 Q1033.5 11.3 1033.5 12.3 V20.8 Q1033.5 21.8 1034.5 21.8 H1042.8 Q1043.8 21.8 1043.8 20.8 V17.4"/><path d="M1036.3 18.6 L1036.7 16.4 L1042.5 10.6 A1.35 1.35 0 0 1 1044.4 12.5 L1038.6 18.3 Z"/></g><g stroke="#2abb36"><path d="M1065.7 10.6 H1068.5 Q1070.6 10.6 1070.6 12.7 V17.5 Q1070.6 18.7 1069.4 18.7 H1065.7 Q1064.5 18.7 1064.5 17.5 V11.8 Q1064.5 10.6 1065.7 10.6 Z"/><path d="M1064.4 13.4 H1060.7 Q1059.5 13.4 1059.5 14.6 V20.4 Q1059.5 21.6 1060.7 21.6 H1064.7 Q1065.9 21.6 1065.9 20.4 V18.8"/></g><g stroke="#f28b18"><path d="M1085.5 21.5 L1085.9 19.1 L1094.4 10.6 A1.7 1.7 0 0 1 1096.8 13 L1088.3 21.5 Z"/><path d="M1093.2 11.9 L1095.5 14.2"/></g><g stroke="#1eb57f" stroke-width="1.0"><rect x="1110.9" y="14.7" width="9.4" height="4.6" rx="2.3" transform="rotate(-38 1115.6 17)"/><rect x="1116.7" y="12.6" width="9.4" height="4.6" rx="2.3" transform="rotate(-38 1121.4 14.9)"/></g><g stroke="#6d3acb"><path d="M1148.8 15.9 V14.6 L1145.8 10.6 H1141.5 Q1140.5 10.6 1140.5 11.6 V20.6 Q1140.5 21.6 1141.5 21.6 H1147.8 Q1148.8 21.6 1148.8 20.6 V19.4"/><path d="M1145.8 10.8 V13.6 Q1145.8 14.6 1146.8 14.6 H1148.6 Z" fill="#6d3acb" stroke-width="0.8"/><path d="M1145.4 17.5 H1153.3 M1151.3 15.5 L1153.3 17.5 L1151.3 19.5"/></g><g stroke="#ff2a3c"><path d="M1168.4 12.4 H1178.2"/><path d="M1171.8 12.2 V11.2 Q1171.8 10.5 1172.5 10.5 H1174.2 Q1174.9 10.5 1174.9 11.2 V12.2"/><path d="M1169.2 12.8 L1169.9 20.9 Q1170 21.7 1170.8 21.7 H1175.9 Q1176.7 21.7 1176.8 20.9 L1177.5 12.8"/><path d="M1171.6 14.8 V19.6 M1173.3 14.8 V19.6 M1175 14.8 V19.6" stroke-width="0.85"/></g></g></svg>
<svg style="left:0;top:312px" width="1246" height="28" viewBox="0 0 1246 28"><g fill="none" stroke-width="1.05" stroke-linecap="round" stroke-linejoin="round"><g stroke="#7342d3"><path d="M1037.4 11.3 H1034.5 Q1033.5 11.3 1033.5 12.3 V20.8 Q1033.5 21.8 1034.5 21.8 H1042.8 Q1043.8 21.8 1043.8 20.8 V17.4"/><path d="M1036.3 18.6 L1036.7 16.4 L1042.5 10.6 A1.35 1.35 0 0 1 1044.4 12.5 L1038.6 18.3 Z"/></g><g stroke="#2abb36"><path d="M1065.7 10.6 H1068.5 Q1070.6 10.6 1070.6 12.7 V17.5 Q1070.6 18.7 1069.4 18.7 H1065.7 Q1064.5 18.7 1064.5 17.5 V11.8 Q1064.5 10.6 1065.7 10.6 Z"/><path d="M1064.4 13.4 H1060.7 Q1059.5 13.4 1059.5 14.6 V20.4 Q1059.5 21.6 1060.7 21.6 H1064.7 Q1065.9 21.6 1065.9 20.4 V18.8"/></g><g stroke="#f28b18"><path d="M1085.5 21.5 L1085.9 19.1 L1094.4 10.6 A1.7 1.7 0 0 1 1096.8 13 L1088.3 21.5 Z"/><path d="M1093.2 11.9 L1095.5 14.2"/></g><g stroke="#1eb57f" stroke-width="1.0"><rect x="1110.9" y="14.7" width="9.4" height="4.6" rx="2.3" transform="rotate(-38 1115.6 17)"/><rect x="1116.7" y="12.6" width="9.4" height="4.6" rx="2.3" transform="rotate(-38 1121.4 14.9)"/></g><g stroke="#6d3acb"><path d="M1148.8 15.9 V14.6 L1145.8 10.6 H1141.5 Q1140.5 10.6 1140.5 11.6 V20.6 Q1140.5 21.6 1141.5 21.6 H1147.8 Q1148.8 21.6 1148.8 20.6 V19.4"/><path d="M1145.8 10.8 V13.6 Q1145.8 14.6 1146.8 14.6 H1148.6 Z" fill="#6d3acb" stroke-width="0.8"/><path d="M1145.4 17.5 H1153.3 M1151.3 15.5 L1153.3 17.5 L1151.3 19.5"/></g><g stroke="#ff2a3c"><path d="M1168.4 12.4 H1178.2"/><path d="M1171.8 12.2 V11.2 Q1171.8 10.5 1172.5 10.5 H1174.2 Q1174.9 10.5 1174.9 11.2 V12.2"/><path d="M1169.2 12.8 L1169.9 20.9 Q1170 21.7 1170.8 21.7 H1175.9 Q1176.7 21.7 1176.8 20.9 L1177.5 12.8"/><path d="M1171.6 14.8 V19.6 M1173.3 14.8 V19.6 M1175 14.8 V19.6" stroke-width="0.85"/></g></g></svg>
<svg style="left:0;top:340px" width="1246" height="28" viewBox="0 0 1246 28"><g fill="none" stroke-width="1.05" stroke-linecap="round" stroke-linejoin="round"><g stroke="#7342d3"><path d="M1037.4 11.3 H1034.5 Q1033.5 11.3 1033.5 12.3 V20.8 Q1033.5 21.8 1034.5 21.8 H1042.8 Q1043.8 21.8 1043.8 20.8 V17.4"/><path d="M1036.3 18.6 L1036.7 16.4 L1042.5 10.6 A1.35 1.35 0 0 1 1044.4 12.5 L1038.6 18.3 Z"/></g><g stroke="#2abb36"><path d="M1065.7 10.6 H1068.5 Q1070.6 10.6 1070.6 12.7 V17.5 Q1070.6 18.7 1069.4 18.7 H1065.7 Q1064.5 18.7 1064.5 17.5 V11.8 Q1064.5 10.6 1065.7 10.6 Z"/><path d="M1064.4 13.4 H1060.7 Q1059.5 13.4 1059.5 14.6 V20.4 Q1059.5 21.6 1060.7 21.6 H1064.7 Q1065.9 21.6 1065.9 20.4 V18.8"/></g><g stroke="#f28b18"><path d="M1085.5 21.5 L1085.9 19.1 L1094.4 10.6 A1.7 1.7 0 0 1 1096.8 13 L1088.3 21.5 Z"/><path d="M1093.2 11.9 L1095.5 14.2"/></g><g stroke="#1eb57f" stroke-width="1.0"><rect x="1110.9" y="14.7" width="9.4" height="4.6" rx="2.3" transform="rotate(-38 1115.6 17)"/><rect x="1116.7" y="12.6" width="9.4" height="4.6" rx="2.3" transform="rotate(-38 1121.4 14.9)"/></g><g stroke="#6d3acb"><path d="M1148.8 15.9 V14.6 L1145.8 10.6 H1141.5 Q1140.5 10.6 1140.5 11.6 V20.6 Q1140.5 21.6 1141.5 21.6 H1147.8 Q1148.8 21.6 1148.8 20.6 V19.4"/><path d="M1145.8 10.8 V13.6 Q1145.8 14.6 1146.8 14.6 H1148.6 Z" fill="#6d3acb" stroke-width="0.8"/><path d="M1145.4 17.5 H1153.3 M1151.3 15.5 L1153.3 17.5 L1151.3 19.5"/></g><g stroke="#ff2a3c"><path d="M1168.4 12.4 H1178.2"/><path d="M1171.8 12.2 V11.2 Q1171.8 10.5 1172.5 10.5 H1174.2 Q1174.9 10.5 1174.9 11.2 V12.2"/><path d="M1169.2 12.8 L1169.9 20.9 Q1170 21.7 1170.8 21.7 H1175.9 Q1176.7 21.7 1176.8 20.9 L1177.5 12.8"/><path d="M1171.6 14.8 V19.6 M1173.3 14.8 V19.6 M1175 14.8 V19.6" stroke-width="0.85"/></g></g></svg>
<svg style="left:0;top:368px" width="1246" height="28" viewBox="0 0 1246 28"><g fill="none" stroke-width="1.05" stroke-linecap="round" stroke-linejoin="round"><g stroke="#7342d3"><path d="M1037.4 11.3 H1034.5 Q1033.5 11.3 1033.5 12.3 V20.8 Q1033.5 21.8 1034.5 21.8 H1042.8 Q1043.8 21.8 1043.8 20.8 V17.4"/><path d="M1036.3 18.6 L1036.7 16.4 L1042.5 10.6 A1.35 1.35 0 0 1 1044.4 12.5 L1038.6 18.3 Z"/></g><g stroke="#2abb36"><path d="M1065.7 10.6 H1068.5 Q1070.6 10.6 1070.6 12.7 V17.5 Q1070.6 18.7 1069.4 18.7 H1065.7 Q1064.5 18.7 1064.5 17.5 V11.8 Q1064.5 10.6 1065.7 10.6 Z"/><path d="M1064.4 13.4 H1060.7 Q1059.5 13.4 1059.5 14.6 V20.4 Q1059.5 21.6 1060.7 21.6 H1064.7 Q1065.9 21.6 1065.9 20.4 V18.8"/></g><g stroke="#f28b18"><path d="M1085.5 21.5 L1085.9 19.1 L1094.4 10.6 A1.7 1.7 0 0 1 1096.8 13 L1088.3 21.5 Z"/><path d="M1093.2 11.9 L1095.5 14.2"/></g><g stroke="#1eb57f" stroke-width="1.0"><rect x="1110.9" y="14.7" width="9.4" height="4.6" rx="2.3" transform="rotate(-38 1115.6 17)"/><rect x="1116.7" y="12.6" width="9.4" height="4.6" rx="2.3" transform="rotate(-38 1121.4 14.9)"/></g><g stroke="#6d3acb"><path d="M1148.8 15.9 V14.6 L1145.8 10.6 H1141.5 Q1140.5 10.6 1140.5 11.6 V20.6 Q1140.5 21.6 1141.5 21.6 H1147.8 Q1148.8 21.6 1148.8 20.6 V19.4"/><path d="M1145.8 10.8 V13.6 Q1145.8 14.6 1146.8 14.6 H1148.6 Z" fill="#6d3acb" stroke-width="0.8"/><path d="M1145.4 17.5 H1153.3 M1151.3 15.5 L1153.3 17.5 L1151.3 19.5"/></g><g stroke="#ff2a3c"><path d="M1168.4 12.4 H1178.2"/><path d="M1171.8 12.2 V11.2 Q1171.8 10.5 1172.5 10.5 H1174.2 Q1174.9 10.5 1174.9 11.2 V12.2"/><path d="M1169.2 12.8 L1169.9 20.9 Q1170 21.7 1170.8 21.7 H1175.9 Q1176.7 21.7 1176.8 20.9 L1177.5 12.8"/><path d="M1171.6 14.8 V19.6 M1173.3 14.8 V19.6 M1175 14.8 V19.6" stroke-width="0.85"/></g></g></svg>
<svg style="left:0;top:396px" width="1246" height="28" viewBox="0 0 1246 28"><g fill="none" stroke-width="1.05" stroke-linecap="round" stroke-linejoin="round"><g stroke="#7342d3"><path d="M1037.4 11.3 H1034.5 Q1033.5 11.3 1033.5 12.3 V20.8 Q1033.5 21.8 1034.5 21.8 H1042.8 Q1043.8 21.8 1043.8 20.8 V17.4"/><path d="M1036.3 18.6 L1036.7 16.4 L1042.5 10.6 A1.35 1.35 0 0 1 1044.4 12.5 L1038.6 18.3 Z"/></g><g stroke="#2abb36"><path d="M1065.7 10.6 H1068.5 Q1070.6 10.6 1070.6 12.7 V17.5 Q1070.6 18.7 1069.4 18.7 H1065.7 Q1064.5 18.7 1064.5 17.5 V11.8 Q1064.5 10.6 1065.7 10.6 Z"/><path d="M1064.4 13.4 H1060.7 Q1059.5 13.4 1059.5 14.6 V20.4 Q1059.5 21.6 1060.7 21.6 H1064.7 Q1065.9 21.6 1065.9 20.4 V18.8"/></g><g stroke="#f28b18"><path d="M1085.5 21.5 L1085.9 19.1 L1094.4 10.6 A1.7 1.7 0 0 1 1096.8 13 L1088.3 21.5 Z"/><path d="M1093.2 11.9 L1095.5 14.2"/></g><g stroke="#1eb57f" stroke-width="1.0"><rect x="1110.9" y="14.7" width="9.4" height="4.6" rx="2.3" transform="rotate(-38 1115.6 17)"/><rect x="1116.7" y="12.6" width="9.4" height="4.6" rx="2.3" transform="rotate(-38 1121.4 14.9)"/></g><g stroke="#6d3acb"><path d="M1148.8 15.9 V14.6 L1145.8 10.6 H1141.5 Q1140.5 10.6 1140.5 11.6 V20.6 Q1140.5 21.6 1141.5 21.6 H1147.8 Q1148.8 21.6 1148.8 20.6 V19.4"/><path d="M1145.8 10.8 V13.6 Q1145.8 14.6 1146.8 14.6 H1148.6 Z" fill="#6d3acb" stroke-width="0.8"/><path d="M1145.4 17.5 H1153.3 M1151.3 15.5 L1153.3 17.5 L1151.3 19.5"/></g><g stroke="#ff2a3c"><path d="M1168.4 12.4 H1178.2"/><path d="M1171.8 12.2 V11.2 Q1171.8 10.5 1172.5 10.5 H1174.2 Q1174.9 10.5 1174.9 11.2 V12.2"/><path d="M1169.2 12.8 L1169.9 20.9 Q1170 21.7 1170.8 21.7 H1175.9 Q1176.7 21.7 1176.8 20.9 L1177.5 12.8"/><path d="M1171.6 14.8 V19.6 M1173.3 14.8 V19.6 M1175 14.8 V19.6" stroke-width="0.85"/></g></g></svg>
<svg style="left:0;top:424px" width="1246" height="28" viewBox="0 0 1246 28"><g fill="none" stroke-width="1.05" stroke-linecap="round" stroke-linejoin="round"><g stroke="#7342d3"><path d="M1037.4 11.3 H1034.5 Q1033.5 11.3 1033.5 12.3 V20.8 Q1033.5 21.8 1034.5 21.8 H1042.8 Q1043.8 21.8 1043.8 20.8 V17.4"/><path d="M1036.3 18.6 L1036.7 16.4 L1042.5 10.6 A1.35 1.35 0 0 1 1044.4 12.5 L1038.6 18.3 Z"/></g><g stroke="#2abb36"><path d="M1065.7 10.6 H1068.5 Q1070.6 10.6 1070.6 12.7 V17.5 Q1070.6 18.7 1069.4 18.7 H1065.7 Q1064.5 18.7 1064.5 17.5 V11.8 Q1064.5 10.6 1065.7 10.6 Z"/><path d="M1064.4 13.4 H1060.7 Q1059.5 13.4 1059.5 14.6 V20.4 Q1059.5 21.6 1060.7 21.6 H1064.7 Q1065.9 21.6 1065.9 20.4 V18.8"/></g><g stroke="#f28b18"><path d="M1085.5 21.5 L1085.9 19.1 L1094.4 10.6 A1.7 1.7 0 0 1 1096.8 13 L1088.3 21.5 Z"/><path d="M1093.2 11.9 L1095.5 14.2"/></g><g stroke="#1eb57f" stroke-width="1.0"><rect x="1110.9" y="14.7" width="9.4" height="4.6" rx="2.3" transform="rotate(-38 1115.6 17)"/><rect x="1116.7" y="12.6" width="9.4" height="4.6" rx="2.3" transform="rotate(-38 1121.4 14.9)"/></g><g stroke="#6d3acb"><path d="M1148.8 15.9 V14.6 L1145.8 10.6 H1141.5 Q1140.5 10.6 1140.5 11.6 V20.6 Q1140.5 21.6 1141.5 21.6 H1147.8 Q1148.8 21.6 1148.8 20.6 V19.4"/><path d="M1145.8 10.8 V13.6 Q1145.8 14.6 1146.8 14.6 H1148.6 Z" fill="#6d3acb" stroke-width="0.8"/><path d="M1145.4 17.5 H1153.3 M1151.3 15.5 L1153.3 17.5 L1151.3 19.5"/></g><g stroke="#ff2a3c"><path d="M1168.4 12.4 H1178.2"/><path d="M1171.8 12.2 V11.2 Q1171.8 10.5 1172.5 10.5 H1174.2 Q1174.9 10.5 1174.9 11.2 V12.2"/><path d="M1169.2 12.8 L1169.9 20.9 Q1170 21.7 1170.8 21.7 H1175.9 Q1176.7 21.7 1176.8 20.9 L1177.5 12.8"/><path d="M1171.6 14.8 V19.6 M1173.3 14.8 V19.6 M1175 14.8 V19.6" stroke-width="0.85"/></g></g></svg>
<svg style="left:0;top:452px" width="1246" height="28" viewBox="0 0 1246 28"><g fill="none" stroke-width="1.05" stroke-linecap="round" stroke-linejoin="round"><g stroke="#7342d3"><path d="M1037.4 11.3 H1034.5 Q1033.5 11.3 1033.5 12.3 V20.8 Q1033.5 21.8 1034.5 21.8 H1042.8 Q1043.8 21.8 1043.8 20.8 V17.4"/><path d="M1036.3 18.6 L1036.7 16.4 L1042.5 10.6 A1.35 1.35 0 0 1 1044.4 12.5 L1038.6 18.3 Z"/></g><g stroke="#2abb36"><path d="M1065.7 10.6 H1068.5 Q1070.6 10.6 1070.6 12.7 V17.5 Q1070.6 18.7 1069.4 18.7 H1065.7 Q1064.5 18.7 1064.5 17.5 V11.8 Q1064.5 10.6 1065.7 10.6 Z"/><path d="M1064.4 13.4 H1060.7 Q1059.5 13.4 1059.5 14.6 V20.4 Q1059.5 21.6 1060.7 21.6 H1064.7 Q1065.9 21.6 1065.9 20.4 V18.8"/></g><g stroke="#f28b18"><path d="M1085.5 21.5 L1085.9 19.1 L1094.4 10.6 A1.7 1.7 0 0 1 1096.8 13 L1088.3 21.5 Z"/><path d="M1093.2 11.9 L1095.5 14.2"/></g><g stroke="#1eb57f" stroke-width="1.0"><rect x="1110.9" y="14.7" width="9.4" height="4.6" rx="2.3" transform="rotate(-38 1115.6 17)"/><rect x="1116.7" y="12.6" width="9.4" height="4.6" rx="2.3" transform="rotate(-38 1121.4 14.9)"/></g><g stroke="#6d3acb"><path d="M1148.8 15.9 V14.6 L1145.8 10.6 H1141.5 Q1140.5 10.6 1140.5 11.6 V20.6 Q1140.5 21.6 1141.5 21.6 H1147.8 Q1148.8 21.6 1148.8 20.6 V19.4"/><path d="M1145.8 10.8 V13.6 Q1145.8 14.6 1146.8 14.6 H1148.6 Z" fill="#6d3acb" stroke-width="0.8"/><path d="M1145.4 17.5 H1153.3 M1151.3 15.5 L1153.3 17.5 L1151.3 19.5"/></g><g stroke="#ff2a3c"><path d="M1168.4 12.4 H1178.2"/><path d="M1171.8 12.2 V11.2 Q1171.8 10.5 1172.5 10.5 H1174.2 Q1174.9 10.5 1174.9 11.2 V12.2"/><path d="M1169.2 12.8 L1169.9 20.9 Q1170 21.7 1170.8 21.7 H1175.9 Q1176.7 21.7 1176.8 20.9 L1177.5 12.8"/><path d="M1171.6 14.8 V19.6 M1173.3 14.8 V19.6 M1175 14.8 V19.6" stroke-width="0.85"/></g></g></svg>
<svg style="left:0;top:480px" width="1246" height="28" viewBox="0 0 1246 28"><g fill="none" stroke-width="1.05" stroke-linecap="round" stroke-linejoin="round"><g stroke="#7342d3"><path d="M1037.4 11.3 H1034.5 Q1033.5 11.3 1033.5 12.3 V20.8 Q1033.5 21.8 1034.5 21.8 H1042.8 Q1043.8 21.8 1043.8 20.8 V17.4"/><path d="M1036.3 18.6 L1036.7 16.4 L1042.5 10.6 A1.35 1.35 0 0 1 1044.4 12.5 L1038.6 18.3 Z"/></g><g stroke="#2abb36"><path d="M1065.7 10.6 H1068.5 Q1070.6 10.6 1070.6 12.7 V17.5 Q1070.6 18.7 1069.4 18.7 H1065.7 Q1064.5 18.7 1064.5 17.5 V11.8 Q1064.5 10.6 1065.7 10.6 Z"/><path d="M1064.4 13.4 H1060.7 Q1059.5 13.4 1059.5 14.6 V20.4 Q1059.5 21.6 1060.7 21.6 H1064.7 Q1065.9 21.6 1065.9 20.4 V18.8"/></g><g stroke="#f28b18"><path d="M1085.5 21.5 L1085.9 19.1 L1094.4 10.6 A1.7 1.7 0 0 1 1096.8 13 L1088.3 21.5 Z"/><path d="M1093.2 11.9 L1095.5 14.2"/></g><g stroke="#1eb57f" stroke-width="1.0"><rect x="1110.9" y="14.7" width="9.4" height="4.6" rx="2.3" transform="rotate(-38 1115.6 17)"/><rect x="1116.7" y="12.6" width="9.4" height="4.6" rx="2.3" transform="rotate(-38 1121.4 14.9)"/></g><g stroke="#6d3acb"><path d="M1148.8 15.9 V14.6 L1145.8 10.6 H1141.5 Q1140.5 10.6 1140.5 11.6 V20.6 Q1140.5 21.6 1141.5 21.6 H1147.8 Q1148.8 21.6 1148.8 20.6 V19.4"/><path d="M1145.8 10.8 V13.6 Q1145.8 14.6 1146.8 14.6 H1148.6 Z" fill="#6d3acb" stroke-width="0.8"/><path d="M1145.4 17.5 H1153.3 M1151.3 15.5 L1153.3 17.5 L1151.3 19.5"/></g><g stroke="#ff2a3c"><path d="M1168.4 12.4 H1178.2"/><path d="M1171.8 12.2 V11.2 Q1171.8 10.5 1172.5 10.5 H1174.2 Q1174.9 10.5 1174.9 11.2 V12.2"/><path d="M1169.2 12.8 L1169.9 20.9 Q1170 21.7 1170.8 21.7 H1175.9 Q1176.7 21.7 1176.8 20.9 L1177.5 12.8"/><path d="M1171.6 14.8 V19.6 M1173.3 14.8 V19.6 M1175 14.8 V19.6" stroke-width="0.85"/></g></g></svg>
<svg style="left:0;top:508px" width="1246" height="28" viewBox="0 0 1246 28"><g fill="none" stroke-width="1.05" stroke-linecap="round" stroke-linejoin="round"><g stroke="#7342d3"><path d="M1037.4 11.3 H1034.5 Q1033.5 11.3 1033.5 12.3 V20.8 Q1033.5 21.8 1034.5 21.8 H1042.8 Q1043.8 21.8 1043.8 20.8 V17.4"/><path d="M1036.3 18.6 L1036.7 16.4 L1042.5 10.6 A1.35 1.35 0 0 1 1044.4 12.5 L1038.6 18.3 Z"/></g><g stroke="#2abb36"><path d="M1065.7 10.6 H1068.5 Q1070.6 10.6 1070.6 12.7 V17.5 Q1070.6 18.7 1069.4 18.7 H1065.7 Q1064.5 18.7 1064.5 17.5 V11.8 Q1064.5 10.6 1065.7 10.6 Z"/><path d="M1064.4 13.4 H1060.7 Q1059.5 13.4 1059.5 14.6 V20.4 Q1059.5 21.6 1060.7 21.6 H1064.7 Q1065.9 21.6 1065.9 20.4 V18.8"/></g><g stroke="#f28b18"><path d="M1085.5 21.5 L1085.9 19.1 L1094.4 10.6 A1.7 1.7 0 0 1 1096.8 13 L1088.3 21.5 Z"/><path d="M1093.2 11.9 L1095.5 14.2"/></g><g stroke="#1eb57f" stroke-width="1.0"><rect x="1110.9" y="14.7" width="9.4" height="4.6" rx="2.3" transform="rotate(-38 1115.6 17)"/><rect x="1116.7" y="12.6" width="9.4" height="4.6" rx="2.3" transform="rotate(-38 1121.4 14.9)"/></g><g stroke="#6d3acb"><path d="M1148.8 15.9 V14.6 L1145.8 10.6 H1141.5 Q1140.5 10.6 1140.5 11.6 V20.6 Q1140.5 21.6 1141.5 21.6 H1147.8 Q1148.8 21.6 1148.8 20.6 V19.4"/><path d="M1145.8 10.8 V13.6 Q1145.8 14.6 1146.8 14.6 H1148.6 Z" fill="#6d3acb" stroke-width="0.8"/><path d="M1145.4 17.5 H1153.3 M1151.3 15.5 L1153.3 17.5 L1151.3 19.5"/></g><g stroke="#ff2a3c"><path d="M1168.4 12.4 H1178.2"/><path d="M1171.8 12.2 V11.2 Q1171.8 10.5 1172.5 10.5 H1174.2 Q1174.9 10.5 1174.9 11.2 V12.2"/><path d="M1169.2 12.8 L1169.9 20.9 Q1170 21.7 1170.8 21.7 H1175.9 Q1176.7 21.7 1176.8 20.9 L1177.5 12.8"/><path d="M1171.6 14.8 V19.6 M1173.3 14.8 V19.6 M1175 14.8 V19.6" stroke-width="0.85"/></g></g></svg>
<div class="t" style="left:24.68px;top:61px;font-size:15.94px;color:#1b1b1b;transform:scaleX(0.9051);-webkit-text-stroke:0.35px currentColor;">Systems</div>
<div class="t" style="left:24.41px;top:238px;font-size:15.94px;color:#1b1b1b;transform:scaleX(0.9358);-webkit-text-stroke:0.35px currentColor;">Processing</div>
<div class="t" style="left:24.48px;top:389px;font-size:15.94px;color:#1b1b1b;transform:scaleX(1.0272);-webkit-text-stroke:0.35px currentColor;">Output</div>
<div class="t" style="left:44.01px;top:106px;font-size:12.32px;color:#262626;transform:scaleX(0.9516);-webkit-text-stroke:0.1px currentColor;">Overview</div>
<div class="t" style="left:44.60px;top:131px;font-size:12.32px;color:#262626;transform:scaleX(0.9147);-webkit-text-stroke:0.1px currentColor;">AD</div>
<div class="t" style="left:44.00px;top:156px;font-size:12.32px;color:#262626;transform:scaleX(0.9725);-webkit-text-stroke:0.1px currentColor;">Google</div>
<div class="t" style="left:43.69px;top:181px;font-size:12.32px;color:#262626;transform:scaleX(0.9239);-webkit-text-stroke:0.1px currentColor;">HRMS</div>
<div class="t" style="left:43.72px;top:206px;font-size:12.32px;color:#262626;transform:scaleX(1.0159);-webkit-text-stroke:0.1px currentColor;">internal</div>
<div class="t" style="left:43.67px;top:283px;font-size:12.32px;color:#262626;transform:scaleX(0.9480);-webkit-text-stroke:0.1px currentColor;">Relations</div>
<div class="t" style="left:43.66px;top:308px;font-size:12.32px;color:#262626;transform:scaleX(0.9516);-webkit-text-stroke:0.1px currentColor;">Filters</div>
<div class="t" style="left:43.63px;top:333px;font-size:12.32px;color:#262626;transform:scaleX(0.9874);-webkit-text-stroke:0.1px currentColor;">Name generation</div>
<div class="t" style="left:43.65px;top:358px;font-size:12.32px;color:#262626;transform:scaleX(0.9609);-webkit-text-stroke:0.1px currentColor;">Password generation</div>
<div class="t" style="left:43.61px;top:434px;font-size:12.32px;color:#262626;transform:scaleX(1.0079);-webkit-text-stroke:0.1px currentColor;">Mappings</div>
<div class="t" style="left:43.70px;top:459px;font-size:12.32px;color:#262626;transform:scaleX(0.9115);-webkit-text-stroke:0.1px currentColor;">Roles</div>
<div class="t" style="left:44.38px;top:484px;font-size:12.32px;color:#262626;transform:scaleX(0.9023);-webkit-text-stroke:0.1px currentColor;">Jobs</div>
<div class="t" style="left:44.60px;top:509px;font-size:12.32px;color:#262626;transform:scaleX(0.9856);-webkit-text-stroke:0.1px currentColor;">Auditing queries</div>
<div class="t" style="left:312.50px;top:12px;font-size:16.52px;color:#f2f4f8;transform:scaleX(0.9118);">Processing</div>
<div class="t" style="left:428.94px;top:12px;font-size:16.52px;color:#f6f7fa;font-weight:bold;transform:scaleX(0.9132);">Filters</div>
<div class="t" style="left:312.27px;top:109px;font-size:15.94px;color:#161616;transform:scaleX(0.9615);-webkit-text-stroke:0.4px currentColor;">Filters</div>
<div class="t" style="left:378.52px;top:111px;font-size:11.59px;color:#2a2a2a;transform:scaleX(0.8270);-webkit-text-stroke:0px currentColor;">Search...</div>
<div class="t" style="left:325.51px;top:151px;font-size:12.32px;color:#6a6f78;transform:scaleX(1.0066);-webkit-text-stroke:0.05px currentColor;">Name</div>
<div class="t" style="left:625.97px;top:151px;font-size:12.32px;color:#6a6f78;transform:scaleX(1.0195);-webkit-text-stroke:0.05px currentColor;">Valid</div>
<div class="t" style="left:725.50px;top:151px;font-size:12.32px;color:#6a6f78;transform:scaleX(1.0162);-webkit-text-stroke:0.05px currentColor;">Notes</div>
<div class="t" style="left:876.58px;top:151px;font-size:12.32px;color:#6a6f78;transform:scaleX(0.9023);-webkit-text-stroke:0.05px currentColor;">Tags</div>
<div class="t" style="left:1026.00px;top:151px;font-size:12.32px;color:#6a6f78;transform:scaleX(1.0071);-webkit-text-stroke:0.05px currentColor;">Actions</div>
<div class="t" style="left:354.10px;top:182px;font-size:12.46px;color:#1f2328;transform:scaleX(0.9058);">AD_NIM_Users_Active</div><div class="b" style="left:354px;top:193px;width:115px;height:1px;background:repeating-linear-gradient(90deg,#f00 0 1px,transparent 1px 2px)"></div>
<div class="t" style="left:625.81px;top:183px;font-size:11.01px;color:#1f2328;transform:scaleX(1.1535);">no</div><div class="b" style="left:626px;top:193px;width:13px;height:1px;background:repeating-linear-gradient(90deg,#f00 0 1px,transparent 1px 2px)"></div>
<div class="t" style="left:726.40px;top:182px;font-size:12.46px;color:#1f2328;transform:scaleX(0.9452);">AD users that should ...</div>
<div class="t" style="left:354.10px;top:210px;font-size:12.46px;color:#1f2328;transform:scaleX(0.9104);">AD_NIM_Users_Delete</div><div class="b" style="left:354px;top:221px;width:118px;height:1px;background:repeating-linear-gradient(90deg,#f00 0 1px,transparent 1px 2px)"></div>
<div class="t" style="left:625.81px;top:211px;font-size:11.01px;color:#1f2328;transform:scaleX(1.1535);">no</div><div class="b" style="left:626px;top:221px;width:13px;height:1px;background:repeating-linear-gradient(90deg,#f00 0 1px,transparent 1px 2px)"></div>
<div class="t" style="left:725.44px;top:210px;font-size:12.46px;color:#1f2328;transform:scaleX(0.9605);">NIM Users related to ...</div>
<div class="t" style="left:354.10px;top:238px;font-size:12.46px;color:#1f2328;transform:scaleX(0.9022);">AD_NIM_Users_Disable</div><div class="b" style="left:354px;top:249px;width:121px;height:1px;background:repeating-linear-gradient(90deg,#f00 0 1px,transparent 1px 2px)"></div>
<div class="t" style="left:625.81px;top:239px;font-size:11.01px;color:#1f2328;transform:scaleX(1.1535);">no</div><div class="b" style="left:626px;top:249px;width:13px;height:1px;background:repeating-linear-gradient(90deg,#f00 0 1px,transparent 1px 2px)"></div>
<div class="t" style="left:725.45px;top:238px;font-size:12.46px;color:#1f2328;transform:scaleX(0.9518);">NIM Users to be disa...</div>
<div class="t" style="left:354.10px;top:266px;font-size:12.46px;color:#1f2328;transform:scaleX(0.8922);">AD_Report_Users_PasswordExpiry</div>
<div class="t" style="left:626.10px;top:267px;font-size:11.01px;color:#1f2328;transform:scaleX(1.0039);">yes</div>
<div class="t" style="left:354.10px;top:294px;font-size:12.46px;color:#1f2328;transform:scaleX(0.9409);">App_ADGroupManagement_ListGroups</div>
<div class="t" style="left:626.10px;top:295px;font-size:11.01px;color:#1f2328;transform:scaleX(1.0039);">yes</div>
<div class="t" style="left:354.10px;top:322px;font-size:12.46px;color:#1f2328;transform:scaleX(0.9510);">App_ADGroupManagement_Members</div>
<div class="t" style="left:626.10px;top:323px;font-size:11.01px;color:#1f2328;transform:scaleX(1.0039);">yes</div>
<div class="t" style="left:354.10px;top:350px;font-size:12.46px;color:#1f2328;transform:scaleX(0.9415);">App_ADGroupManagement_Members_Avail...</div>
<div class="t" style="left:626.10px;top:351px;font-size:11.01px;color:#1f2328;transform:scaleX(1.0039);">yes</div>
<div class="t" style="left:354.10px;top:378px;font-size:12.46px;color:#1f2328;transform:scaleX(0.9218);">App_ADUserCorrelation_ListUsers</div>
<div class="t" style="left:626.10px;top:379px;font-size:11.01px;color:#1f2328;transform:scaleX(1.0039);">yes</div>
<div class="t" style="left:354.10px;top:406px;font-size:12.46px;color:#1f2328;transform:scaleX(0.9041);">App_ADUserCreate_ListUsers</div>
<div class="t" style="left:626.10px;top:407px;font-size:11.01px;color:#1f2328;transform:scaleX(1.0039);">yes</div>
<div class="t" style="left:354.10px;top:434px;font-size:12.46px;color:#1f2328;transform:scaleX(0.9070);">App_ADUserDuplicates_List_Users</div>
<div class="t" style="left:626.10px;top:435px;font-size:11.01px;color:#1f2328;transform:scaleX(1.0039);">yes</div>
<div class="t" style="left:354.10px;top:462px;font-size:12.46px;color:#1f2328;transform:scaleX(0.9292);">App_AuditApp_Persons</div>
<div class="t" style="left:626.10px;top:463px;font-size:11.01px;color:#1f2328;transform:scaleX(1.0039);">yes</div>
<div class="t" style="left:354.10px;top:490px;font-size:12.46px;color:#1f2328;transform:scaleX(0.9282);">App_GoogleUserCorrelation_ListUsers</div>
<div class="t" style="left:626.10px;top:491px;font-size:11.01px;color:#1f2328;transform:scaleX(1.0039);">yes</div>
<div class="t" style="left:354.10px;top:518px;font-size:12.46px;color:#1f2328;transform:scaleX(0.9223);">App_GoogleUserDuplicates_ListUsers</div>
<div class="t" style="left:626.10px;top:519px;font-size:11.01px;color:#1f2328;transform:scaleX(1.0039);">yes</div>
<svg style="left:0;top:0" width="1246" height="531"><defs><filter id="bl"><feGaussianBlur stdDeviation="0.5"/></filter></defs><path fill="#000" fill-opacity="0.173" fill-rule="evenodd" filter="url(#bl)" d="M-20 -20 H1266 V551 H-20Z M313.5 134.5 H1215 Q1217 134.5 1217 136.5 V260 Q1217 262 1215 262 H313.5 Q311.5 262 311.5 260 V136.5 Q311.5 134.5 313.5 134.5Z"/></svg>
</body></html>
